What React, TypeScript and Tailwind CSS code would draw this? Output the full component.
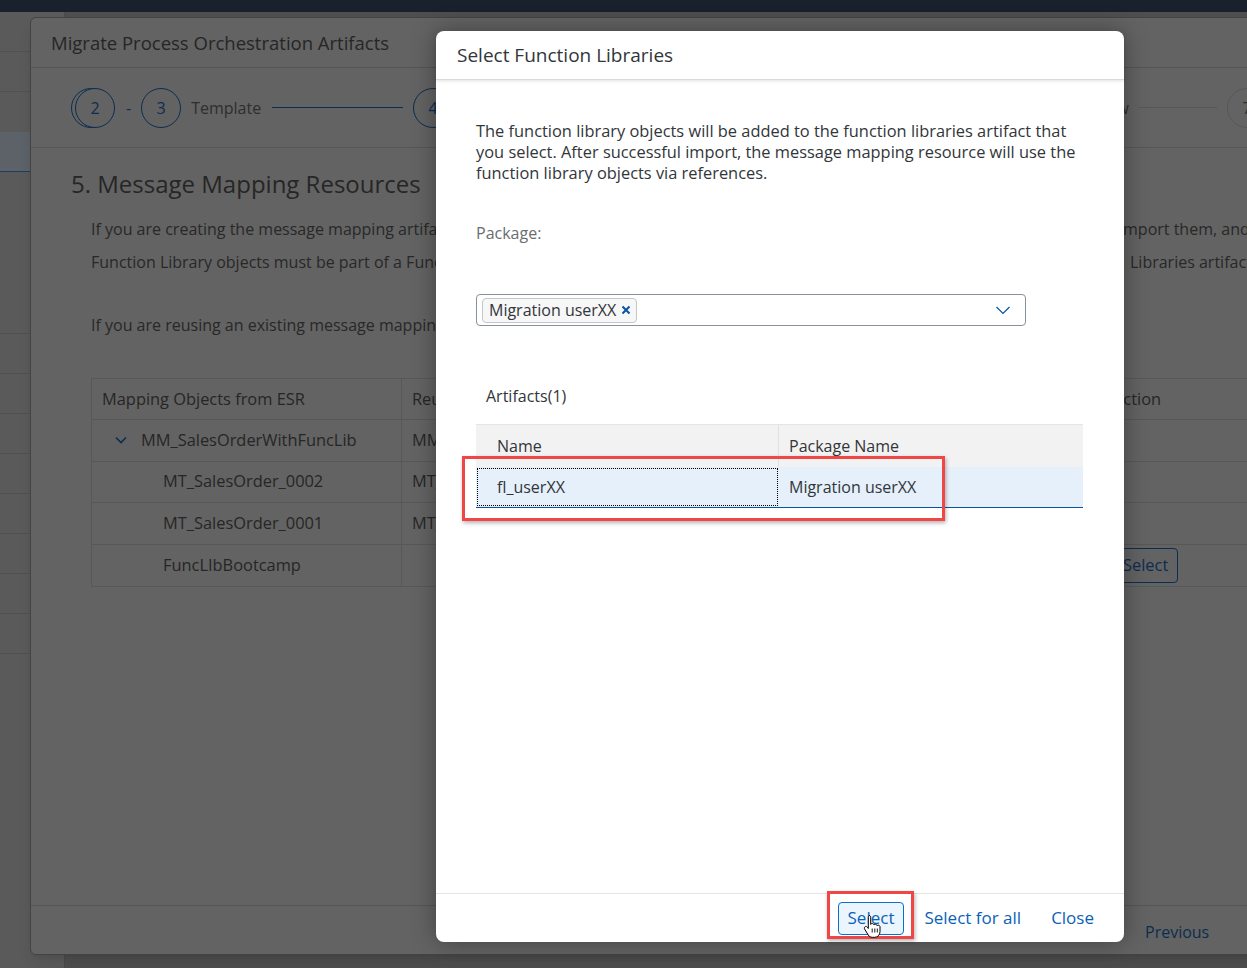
import React from "react";

const DIM_BLUE = "#0c2d4f";

function StepCircle({ n, muted = false }: { n: string; muted?: boolean }) {
  return (
    <span
      className={
        muted
          ? "grid h-10 w-10 shrink-0 place-items-center rounded-full border border-[#575757] text-base text-[#2e2e2e]"
          : "grid h-10 w-10 shrink-0 place-items-center rounded-full border border-[#0c2d4f] text-base text-[#0c2d4f]"
      }
    >
      {n}
    </span>
  );
}

function BackgroundDialog() {
  const rows: [string, string, boolean][] = [
    ["MM_SalesOrderWithFuncLib", "MM_SalesOrderWithFuncLib", true],
    ["MT_SalesOrder_0002", "MT_SalesOrder_0002", false],
    ["MT_SalesOrder_0001", "MT_SalesOrder_0001", false],
    ["FuncLIbBootcamp", "", false],
  ];
  return (
    <div className="absolute left-[30px] top-[17px] flex h-[938px] w-[1250px] flex-col rounded-md border border-[#444] bg-[#636363] text-[#262626] shadow-lg">
      <div className="flex h-[50px] shrink-0 items-center border-b border-[#555] pl-5 text-[18.5px]">
        Migrate Process Orchestration Artifacts
      </div>

      <div className="flex h-20 shrink-0 items-center border-b border-[#575757] pl-10 pr-3">
        <span className="relative h-10 w-[45px] shrink-0">
          <span className="absolute left-0 top-0 h-10 w-10 rounded-full border border-[#0c2d4f]" />
          <span className="absolute left-[4px] top-0 grid h-10 w-10 place-items-center rounded-full border border-[#0c2d4f] bg-[#636363] text-base text-[#0c2d4f]">
            2
          </span>
        </span>
        <span className="ml-[10px] text-base text-[#0c2d4f]">-</span>
        <span className="ml-[10px]">
          <StepCircle n="3" />
        </span>
        <span className="ml-[10px] w-[70px] shrink-0 text-base text-[#2e2e2e]">Template</span>
        <span className="ml-[11px] h-px w-[131px] bg-[#0c2d4f]" />
        <span className="ml-[10px]">
          <StepCircle n="4" />
        </span>
        <span className="ml-[10px] text-base">Value Mappings</span>
        <span className="flex-1" />
        <span className="text-base text-[#2e2e2e]">Review</span>
        <span className="ml-[9px] h-px w-[79px] bg-[#575757]" />
        <span className="ml-[10px]">
          <StepCircle n="7" muted />
        </span>
      </div>

      <div className="flex-1 px-10 pt-[22px]">
        <h2 className="text-[24px] leading-7 text-[#262626]">5. Message Mapping Resources</h2>
        <div className="pl-5 text-base leading-[33px] text-[#282828]">
          <div className="mt-[15px] flex whitespace-nowrap">
            <span className="w-[1028px] shrink-0 overflow-hidden">
              If you are creating the message mapping artifacts with function library objects, you have to
            </span>
            <span className="shrink-0">import them, and</span>
          </div>
          <div className="flex whitespace-nowrap">
            <span className="w-[1039px] shrink-0 overflow-hidden">
              Function Library objects must be part of a Function Libraries artifact. Select the Function
            </span>
            <span className="shrink-0">Libraries artifact</span>
          </div>
          <div className="mt-[30px] whitespace-nowrap">
            If you are reusing an existing message mapping artifact, the function library objects are referenced.
          </div>
        </div>

        <div className="ml-5 mt-[36px] w-[1180px] border border-[#585858] text-[16.4px]">
          <div className="grid h-[41px] grid-cols-[310px_701px_1fr] border-b border-[#585858]">
            <div className="flex items-center border-r border-[#585858] pl-[10px]">Mapping Objects from ESR</div>
            <div className="flex items-center border-r border-[#585858] pl-[10px]">Reused Mapping Objects</div>
            <div className="flex items-center pl-[10px]">Action</div>
          </div>
          {rows.map(([a, b, parent], i) => (
            <div
              key={a}
              className={
                i < rows.length - 1
                  ? "grid h-[41.5px] grid-cols-[310px_701px_1fr] border-b border-[#585858]"
                  : "grid h-[41.5px] grid-cols-[310px_701px_1fr]"
              }
            >
              <div className="flex items-center border-r border-[#585858]">
                {parent ? (
                  <span className="flex items-center pl-[22px]">
                    <svg width="14" height="14" viewBox="0 0 14 14" className="mr-[13px]">
                      <path d="M2 4.5l5 5 5-5" fill="none" stroke={DIM_BLUE} strokeWidth="1.6" />
                    </svg>
                    {a}
                  </span>
                ) : (
                  <span className="pl-[71px]">{a}</span>
                )}
              </div>
              <div className="flex items-center border-r border-[#585858] pl-[10px]">{b}</div>
              <div className="flex items-center pl-[10px]">
                {i === 3 && (
                  <span className="rounded border border-[#0c2d4f] px-[9px] py-[4px] text-[#0c2d4f]">Select</span>
                )}
              </div>
            </div>
          ))}
        </div>
      </div>

      <div className="flex h-[49px] shrink-0 items-center border-t border-[#555] pl-[1102px]">
        <span className="px-3 pt-[3px] text-base text-[#0c2d4f]">Previous</span>
      </div>
    </div>
  );
}

function HandCursor() {
  return (
    <svg width="20" height="24" viewBox="0 0 20 24" className="pointer-events-none">
      <path
        d="M6 1.5c1 0 1.7.8 1.7 1.7v7.2c.3-.6.9-.9 1.5-.9.9 0 1.6.7 1.7 1.5.3-.5.8-.8 1.4-.8.9 0 1.6.7 1.7 1.6.3-.4.8-.6 1.3-.6 1 0 1.7.8 1.7 1.7v4.8c0 3.1-2.2 5.6-5.4 5.6H9.3c-1.9 0-3.2-.9-4.1-2.3L1.6 15c-.5-.9-.2-1.9.6-2.3.8-.4 1.7-.2 2.2.5l.9 1.3V3.2c0-.9.7-1.7 1.7-1.7z"
        fill="#fff"
        stroke="#000"
        strokeWidth="1"
      />
      <path d="M9.2 14.5v4M11.8 14.5v4M14.3 14.5v4" stroke="#000" strokeWidth="0.9" />
    </svg>
  );
}

function SelectDialog() {
  return (
    <div className="absolute left-[436px] top-[31px] flex h-[911px] w-[688px] flex-col rounded-lg bg-white text-[#32363a] shadow-[0_0_24px_rgba(0,0,0,0.35)]">
      <div className="flex h-[49px] shrink-0 items-center border-b border-[#d9d9d9] pl-[21px] text-[19px] shadow-[0_1px_3px_rgba(0,0,0,0.12)]">
        Select Function Libraries
      </div>

      <div className="flex-1 px-10 pt-10">
        <p className="whitespace-nowrap text-[16.4px] leading-[21px]">
          The function library objects will be added to the function libraries artifact that
          <br />
          you select. After successful import, the message mapping resource will use the
          <br />
          function library objects via references.
        </p>
        <div className="mt-10 text-base leading-5 text-[#6a6d70]">Package:</div>

        <div className="mt-[51px] flex h-8 w-[550px] items-center rounded border border-[#89919a] pl-[5px] pr-[14px]">
          <span className="flex h-[25px] items-center rounded border border-[#c4c6c8] bg-[#f7f7f7] pl-[6px] pr-[4px] text-base">
            Migration userXX
            <svg width="12" height="12" viewBox="0 0 12 12" className="ml-[4px]">
              <path d="M2.5 2.5l7 7M9.5 2.5l-7 7" stroke="#0854a0" strokeWidth="2" />
            </svg>
          </span>
          <span className="flex-1" />
          <svg width="16" height="10" viewBox="0 0 16 10">
            <path d="M1.5 2l6.5 6.5L14.5 2" fill="none" stroke="#0854a0" strokeWidth="1.2" />
          </svg>
        </div>

        <div className="mt-[60px] pl-[10px] text-base leading-5">Artifacts(1)</div>

        <div className="relative mt-[18px] w-[607px]">
          <div className="grid h-[43px] grid-cols-[303px_1fr] border-t border-[#e5e5e5] bg-[#f2f2f2] text-base">
            <div className="flex items-center border-r border-[#e0e0e0] pl-[21px]">Name</div>
            <div className="flex items-center pl-[10px]">Package Name</div>
          </div>
          <div className="grid h-[41px] grid-cols-[303px_1fr] border-b border-[#0854a0] bg-[#e5f0fa] text-base">
            <div className="m-[1px] flex items-center border border-dotted border-black pl-[19px]">fl_userXX</div>
            <div className="flex items-center pl-[10px]">Migration userXX</div>
          </div>
          <div className="pointer-events-none absolute left-[-14px] top-[32px] h-[65px] w-[483px] border-[3px] border-[#f04646] shadow-[1px_2px_4px_rgba(0,0,0,0.3)]" />
        </div>
      </div>

      <div className="flex h-[49px] shrink-0 items-center justify-end gap-[6px] border-t border-[#e5e5e5] pr-[18px] text-[17px] text-[#0a62b8]">
        <div className="relative mr-[2px]">
          <span className="flex h-[33px] items-center rounded border border-[#0a6ed1] bg-[#ebf5fe] px-[9px]">Select</span>
          <span className="pointer-events-none absolute -bottom-[4px] -left-[11px] -right-[10px] -top-[11px] border-[3px] border-[#f04646] shadow-[1px_2px_4px_rgba(0,0,0,0.3)]" />
          <span className="absolute left-[25px] top-[12px]">
            <HandCursor />
          </span>
        </div>
        <span className="px-3">Select for all</span>
        <span className="px-3">Close</span>
      </div>
    </div>
  );
}

export default function App() {
  return (
    <div className="relative h-[968px] w-[1247px] overflow-hidden bg-[#4e4e4e] font-['Open_Sans',Arial,sans-serif]">
      <div className="h-3 bg-[#18212c]" />
      <div className="flex h-[956px]">
        <div className="w-[65px] border-r border-[#4a4a4a] bg-[#5a5a5a]">
          <div className="h-10 border-b border-[#515151]" />
          <div className="h-10 border-b border-[#515151]" />
          <div className="h-10" />
          <div className="h-10 border-b border-[#1e3d63] bg-[#5d6268]" />
          <div className="h-[162px] border-b border-[#515151]" />
          {Array.from({ length: 8 }).map((_, i) => (
            <div key={i} className="h-10 border-b border-[#515151]" />
          ))}
        </div>
        <div className="flex-1" />
      </div>

      <BackgroundDialog />
      <SelectDialog />
    </div>
  );
}
